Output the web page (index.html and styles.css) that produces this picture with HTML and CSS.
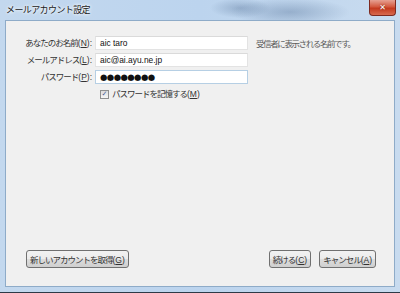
FILE: index.html
```html
<!DOCTYPE html>
<html lang="ja">

<head>
    <meta charset="UTF-8">
    <title>メールアカウント設定</title>
    <link rel="stylesheet" href="styles.css">
</head>

<body>
    <div class="window">
        <div class="titlebar">
            <span class="title">メールアカウント設定</span>
            <span class="close">&#x2715;</span>
        </div>
        <div class="client">
            <div class="form">
                <label class="lbl">あなたのお名前<span class="key">(<u>N</u>):</span></label>
                <div class="field">aic taro</div>
                <span class="hint">受信者に表示される名前です。</span>

                <label class="lbl">メールアドレス<span class="key">(<u>L</u>):</span></label>
                <div class="field">aic@ai.ayu.ne.jp</div>
                <span></span>

                <label class="lbl">パスワード<span class="key">(<u>P</u>):</span></label>
                <div class="field focus"><span class="dots">●●●●●●●●</span></div>
                <span></span>

                <span></span>
                <label class="check"><span class="box">&#x2713;</span>パスワードを記憶する<span class="key">(<u>M</u>)</span></label>
                <span></span>
            </div>
            <div class="buttons">
                <button class="btn">新しいアカウントを取得<span class="key">(<u>G</u>)</span></button>
                <div class="right">
                    <button class="btn">続ける<span class="key">(<u>C</u>)</span></button>
                    <button class="btn">キャンセル<span class="key">(<u>A</u>)</span></button>
                </div>
            </div>
        </div>
        <div class="bottomframe"></div>
    </div>
</body>

</html>
```

FILE: styles.css
```css
* {
    padding: 0;
    margin: 0;
    box-sizing: border-box;
}

body {
    width: 400px;
    height: 293px;
    overflow: hidden;
    font-family: "Liberation Sans", "Noto Sans CJK JP", sans-serif;
    font-size: 8.5px;
    letter-spacing: -1px;
    color: #333;
}

.key {
    letter-spacing: 0;
}

.window {
    width: 400px;
    height: 293px;
    display: flex;
    flex-direction: column;
    padding: 0 5px 0 5px;
    border-bottom: 1px solid #2d3a47;
    background:
        radial-gradient(ellipse 60px 14px at 290px 12px, rgba(70, 100, 140, 0.35), transparent),
        radial-gradient(ellipse 30px 10px at 240px 8px, rgba(60, 90, 130, 0.3), transparent),
        linear-gradient(to right, #c3d8ee 0%, #bcd4ee 50%, #c8dbef 100%);
}

.titlebar {
    height: 20px;
    display: flex;
    justify-content: space-between;
    align-items: flex-start;
}

.title {
    padding: 3px 0 0 1px;
    font-size: 9px;
    letter-spacing: -0.6px;
    color: #1a1a1a;
    text-shadow: 0 0 4px #fff, 0 0 3px #fff;
}

.close {
    width: 27px;
    height: 16px;
    margin-right: -1px;
    border: 1px solid #7d2a20;
    border-top: none;
    border-radius: 0 0 4px 4px;
    background: linear-gradient(#e6a193, #d3593f 45%, #c43a1f 55%, #d76a4f);
    color: #fff;
    font-family: "DejaVu Sans", sans-serif;
    font-size: 8px;
    font-weight: bold;
    letter-spacing: 0;
    text-align: center;
    line-height: 15px;
    text-shadow: 0 0 2px #6b1a10;
}

.client {
    flex: 1;
    display: flex;
    flex-direction: column;
    justify-content: space-between;
    background: #f0f0f0;
    border: 1px solid #8eabc8;
    padding: 15px 18px 18px 0;
}

.form {
    display: grid;
    grid-template-columns: 89px 153px auto;
    row-gap: 3px;
    align-items: center;
}

.lbl {
    text-align: right;
    padding-right: 3px;
    line-height: 14px;
}

.field {
    height: 14px;
    background: #fff;
    border: 1px solid #e3e3e3;
    border-top-color: #dadada;
    font-size: 8.4px;
    letter-spacing: 0;
    line-height: 12px;
    padding-left: 4px;
    color: #111;
}

.field.focus {
    border-color: #b6cfe4;
}

.dots {
    font-family: "DejaVu Sans", sans-serif;
    font-size: 8.5px;
    letter-spacing: -0.6px;
    line-height: 12px;
}

.hint {
    padding-left: 8px;
    color: #5a5a5a;
    letter-spacing: -1.4px;
}

.check {
    display: flex;
    align-items: center;
    padding: 1px 0 0 5px;
    line-height: 12px;
}

.box {
    width: 9px;
    height: 9px;
    margin-right: 3px;
    border: 1px solid #8e8f8f;
    background: linear-gradient(#dcdcdc, #f6f6f6);
    font-family: "DejaVu Sans", sans-serif;
    font-size: 7px;
    letter-spacing: 0;
    line-height: 7px;
    text-align: center;
    color: #4a5f97;
}

.buttons {
    display: flex;
    justify-content: space-between;
    padding-left: 20px;
}

.right {
    display: flex;
    gap: 8px;
}

.btn {
    height: 18px;
    padding: 0 3px;
    border: 1px solid #707070;
    border-radius: 3px;
    background: linear-gradient(#f2f2f2 0%, #ebebeb 50%, #dddddd 51%, #cfcfcf 100%);
    font-family: inherit;
    font-size: 8.5px;
    letter-spacing: -1px;
    color: #333;
}

.bottomframe {
    height: 5px;
}
```
